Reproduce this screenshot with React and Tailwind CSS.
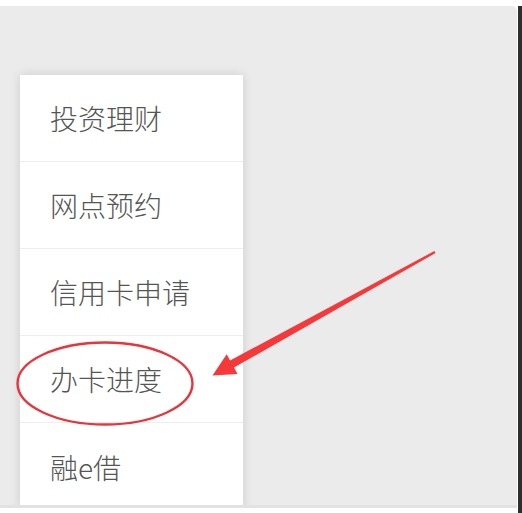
import React from 'react';

const items = ['投资理财', '网点预约', '信用卡申请', '办卡进度', '融e借'];

// red annotation drawn over the menu
const Annotation = () => (
  <svg className="absolute left-0 top-0 pointer-events-none" width="522" height="513" viewBox="0 0 522 513">
    <ellipse cx="105" cy="383.5" rx="87.5" ry="41" fill="none" stroke="#e8353b" strokeWidth="2.4" />
    <polygon
      points="435.6,253 234,367.6 237.5,374 212.5,375.5 226.7,354.2 230.1,360.5 434.4,251"
      fill="#f5383a"
    />
  </svg>
);

const App = () => {
  return (
    <div className="relative w-[522px] h-[513px] bg-white pt-[6px] flex overflow-hidden" style={{ fontFamily: '"Noto Sans CJK SC", "Noto Sans", sans-serif' }}>
      <div className="w-[517px] h-[502px] bg-[#ebebeb] rounded-tr-[5px] pt-[69px] pl-[20px] overflow-hidden border-b-[3px] border-[#e2e2e2]">
        <div className="w-[223px] bg-white shadow-[0_0_10px_rgba(0,0,0,0.13)]">
          {items.map((label, i) => (
            <div
              key={label}
              className={`h-[87px] flex items-center pl-[30px] text-[28px] font-light text-[#555555] ${i < items.length - 1 ? 'border-b border-[#eeeeee]' : ''}`}
            >
              {label}
            </div>
          ))}
        </div>
      </div>
      <div className="w-[4px] ml-[1px] h-full bg-[#2e2e2e]" />
      <Annotation />
    </div>
  );
};

export default App;
